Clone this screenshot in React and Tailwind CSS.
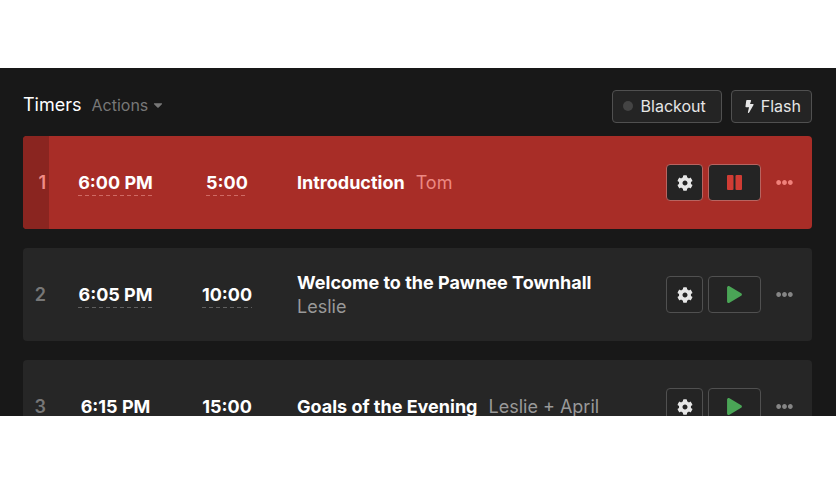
import clsx from 'clsx'
import { FaBolt, FaCaretDown, FaCog, FaEllipsisH, FaPlay } from 'react-icons/fa'

const TIMERS = [
  { id: 1, start: '6:00 PM', duration: '5:00', title: 'Introduction', speaker: 'Tom', running: true },
  { id: 2, start: '6:05 PM', duration: '10:00', title: 'Welcome to the Pawnee Townhall', speaker: 'Leslie', stacked: true },
  { id: 3, start: '6:15 PM', duration: '15:00', title: 'Goals of the Evening', speaker: 'Leslie + April' },
]

export default function App() {
  return (
    <div className="flex h-screen flex-col bg-white py-[68px] font-['Inter',sans-serif]">
      <main className="min-h-0 flex-1 overflow-hidden bg-[#181818] pr-6 pl-[23px]">
        <Toolbar />
        <ul className="flex flex-col gap-[19px]">
          {TIMERS.map((timer) => (
            <TimerRow key={timer.id} timer={timer} />
          ))}
        </ul>
      </main>
    </div>
  )
}

function Toolbar() {
  return (
    <header className="flex items-center justify-between pt-[22px] pb-[13px]">
      <div className="flex items-center gap-[10px] pb-[3px]">
        <h1 className="text-[18px] leading-6 text-white">Timers</h1>
        <button type="button" className="flex items-center gap-[3px] text-[16px] leading-6 text-[#777777]">
          Actions
          <FaCaretDown size={14} />
        </button>
      </div>

      <div className="flex gap-[9px]">
        <ToolbarButton>
          <span className="mr-2 size-[10px] rounded-full bg-[#444444]" />
          Blackout
        </ToolbarButton>
        <ToolbarButton>
          <FaBolt size={13} className="mr-[5px] ml-px" />
          Flash
        </ToolbarButton>
      </div>
    </header>
  )
}

function ToolbarButton({ children }) {
  return (
    <button
      type="button"
      className="flex h-[33px] items-center rounded border border-[#505050] bg-[#242424] pr-[15px] pb-px pl-[10px] text-[16px] text-[#e6e6e6] last:pr-[10px]"
    >
      {children}
    </button>
  )
}

function TimerRow({ timer }) {
  const { id, start, duration, title, speaker, running, stacked } = timer
  const border = running ? 'border-[#b86460]' : 'border-[#505050]'

  return (
    <li
      className={clsx(
        'flex min-h-[93px] items-center overflow-hidden rounded text-[18px] leading-6 font-bold text-white',
        running ? 'bg-[#a82d27]' : 'bg-[#262626]',
      )}
    >
      <div
        className={clsx(
          'flex w-[26px] items-center justify-end self-stretch pr-[3px] font-semibold',
          running ? 'bg-[#8a2520] text-[#f08c86]' : 'text-[#777777]',
        )}
      >
        {id}
      </div>

      <div className="flex w-[133px] justify-center">
        <TimeButton running={running}>{start}</TimeButton>
      </div>
      <div className="mr-[25px] flex w-[90px] justify-center">
        <TimeButton running={running}>{duration}</TimeButton>
      </div>

      <div className={clsx('flex min-w-0 flex-1', stacked ? 'flex-col' : 'gap-[11px]')}>
        <span>{title}</span>
        <span className={clsx('font-normal', running ? 'text-[#ec8882]' : 'text-[#999999]')}>{speaker}</span>
      </div>

      <div className="mr-[5px] flex items-center">
        <button
          type="button"
          aria-label="Timer settings"
          className={clsx('mr-[5px] flex size-[37px] items-center justify-center rounded border bg-[#242424] text-[#e6e6e6]', border)}
        >
          <FaCog size={16} />
        </button>
        <button
          type="button"
          aria-label={running ? 'Pause timer' : 'Start timer'}
          className={clsx('flex h-[37px] w-[53px] items-center justify-center rounded border bg-[#242424]', border)}
        >
          {running ? <PauseIcon /> : <FaPlay size={17} className="text-[#4aa556]" />}
        </button>
        <button
          type="button"
          aria-label="More options"
          className={clsx('flex h-[37px] w-[46px] items-center justify-center', running ? 'text-[#f0817a]' : 'text-[#858585]')}
        >
          <FaEllipsisH size={17} />
        </button>
      </div>
    </li>
  )
}

// The dashed underline is a tiled gradient, native dashes are too short at 1px
function TimeButton({ running, children }) {
  return (
    <button
      type="button"
      className={clsx(
        'bg-[length:7px_1px] bg-bottom-left bg-repeat-x pt-0.5 pb-px leading-6',
        running
          ? 'bg-[linear-gradient(to_right,#cf6a64_4px,transparent_4px)]'
          : 'bg-[linear-gradient(to_right,#606060_4px,transparent_4px)]',
      )}
    >
      {children}
    </button>
  )
}

function PauseIcon() {
  return (
    <svg width="15" height="15" viewBox="0 0 15 15" fill="#d03c34" aria-hidden="true">
      <rect x="0" y="0" width="6.5" height="15" rx="1" />
      <rect x="8.5" y="0" width="6.5" height="15" rx="1" />
    </svg>
  )
}
